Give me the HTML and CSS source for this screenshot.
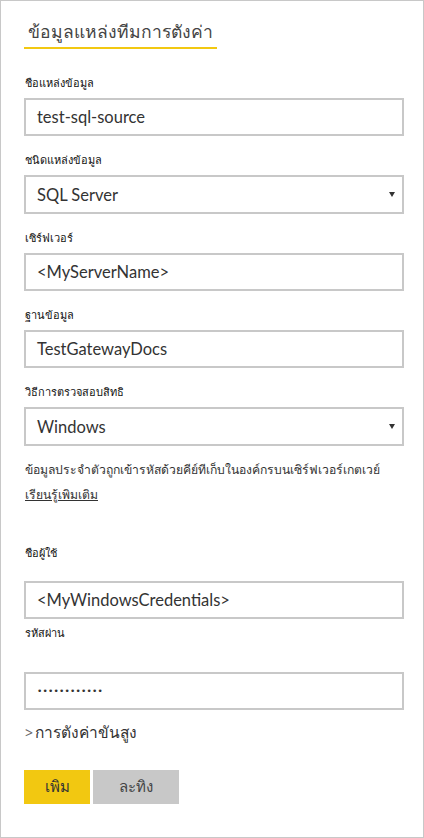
FILE: index.html
```html
<!DOCTYPE html>
<html lang="th">
<head>
<meta charset="utf-8">
<title>ข้อมูลแหล่งทีมการตังค่า</title>
<link rel="stylesheet" href="styles.css">
</head>
<body>
<div class="panel">
  <div class="title-wrap"><h1 class="title">ข้อมูลแหล่งทีมการตังค่า</h1></div>

  <div class="field first">
    <div class="label">ชือแหล่งข้อมูล</div>
    <div class="box">test-sql-source</div>
  </div>
  <div class="field">
    <div class="label">ชนิดแหล่งข้อมูล</div>
    <div class="box select">SQL Server<span class="arrow"></span></div>
  </div>
  <div class="field">
    <div class="label">เซิร์ฟเวอร์</div>
    <div class="box">&lt;MyServerName&gt;</div>
  </div>
  <div class="field">
    <div class="label">ฐานข้อมูล</div>
    <div class="box">TestGatewayDocs</div>
  </div>
  <div class="field">
    <div class="label">วิธีการตรวจสอบสิทธิ</div>
    <div class="box select">Windows<span class="arrow"></span></div>
  </div>

  <p class="info">ข้อมูลประจำตัวถูกเข้ารหัสด้วยคีย์ทีเก็บในองค์กรบนเซิร์ฟเวอร์เกตเวย์<br><a class="learn" href="#">เรียนรู้เพิมเติม</a></p>

  <div class="field user">
    <div class="label">ชือผู้ใช้</div>
    <div class="box">&lt;MyWindowsCredentials&gt;</div>
  </div>
  <div class="field pass">
    <div class="label">รหัสผ่าน</div>
    <div class="box dots">••••••••••••</div>
  </div>

  <div class="advanced"><span class="chev">&gt;</span>การตังค่าขันสูง</div>

  <div class="actions">
    <button class="btn add">เพิม</button>
    <button class="btn cancel">ละทิง</button>
  </div>
</div>
</body>
</html>
```
FILE: styles.css
```css
* { box-sizing: border-box; }
html, body { margin: 0; padding: 0; background: #fff; }
body { font-family: "Noto Sans", "DejaVu Sans", sans-serif; color: #333; }

.panel {
  width: 424px;
  height: 838px;
  border: 1px solid #c8c8c8;
  padding: 0 19px 0 23px;
}

.title-wrap { padding-top: 14px; }
.title {
  display: inline-block;
  white-space: nowrap;
  margin: 0;
  padding: 0 4px;
  font-size: 17.5px;
  font-weight: normal;
  line-height: 32px;
  color: #444;
  border-bottom: 2px solid #f2c811;
}

.field { margin-top: 16px; }
.field.first { margin-top: 26px; }

.label {
  font-size: 11px;
  line-height: 16px;
  height: 16px;
  color: #111;
  margin-bottom: 7px;
  padding-left: 1px;
}

.box {
  height: 38px;
  border: 2px solid #c8c8c8;
  padding: 0 11px;
  font-family: "Lato", "Noto Sans", sans-serif;
  font-size: 16.5px;
  line-height: 34px;
  color: #333;
  display: flex;
  align-items: center;
}
.box.select { height: 39px; justify-content: space-between; padding-right: 7px; }
.arrow {
  width: 0; height: 0;
  border-left: 3px solid transparent;
  border-right: 3px solid transparent;
  border-top: 5px solid #333;
}
.box.dots { font-family: "DejaVu Sans", sans-serif; font-size: 9px; letter-spacing: 0.2px; color: #333; }

.info {
  margin: 11px 0 0;
  font-size: 12.2px;
  line-height: 25px;
  color: #333;
  padding-left: 1px;
}
.learn { color: #333; text-decoration: underline; }

.field.user { margin-top: 38px; }
.field.user .label { margin-bottom: 20px; }
.field.pass { margin-top: 6px; }
.field.pass .label { margin-bottom: 31px; }

.advanced {
  margin-top: 11px;
  font-size: 15.5px;
  line-height: 22px;
  color: #333;
  padding-left: 1px;
}
.chev { font-size: 14px; color: #666; margin-right: 2px; }

.actions { display: flex; gap: 3px; margin-top: 26px; }
.btn {
  height: 34px;
  border: 0;
  padding: 0;
  font-family: inherit;
  font-size: 15px;
  color: #333;
  cursor: pointer;
}
.btn.add { width: 66px; background: #f2c811; }
.btn.cancel { width: 86px; background: #c8c8c8; color: #444; }
```
